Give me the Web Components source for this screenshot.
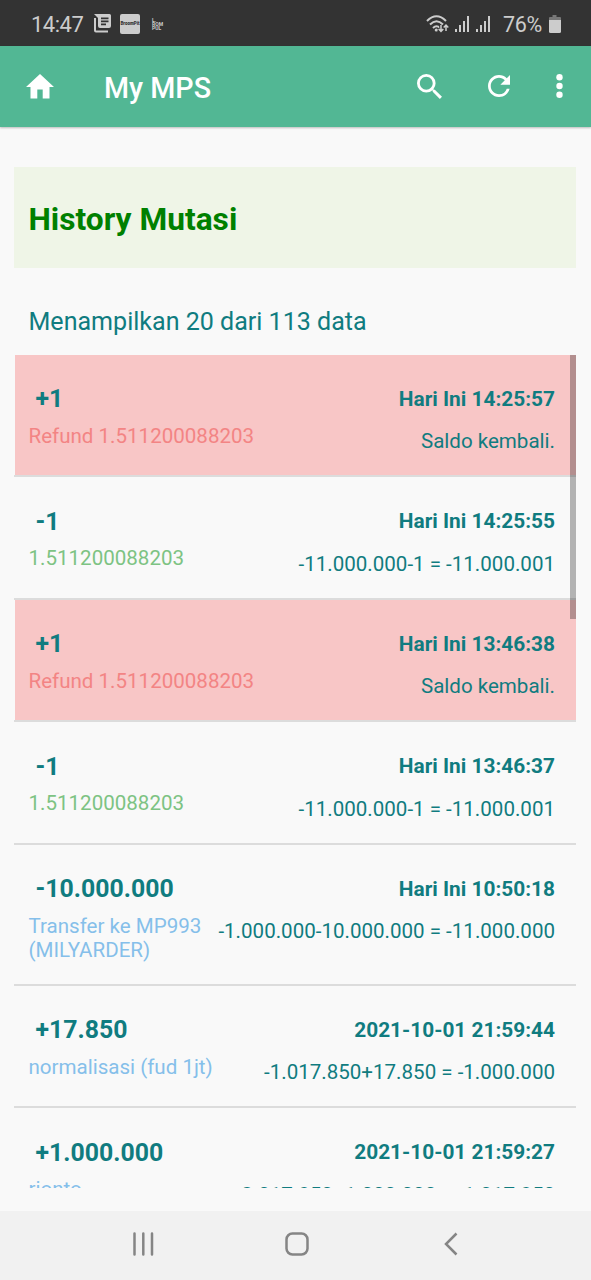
<!DOCTYPE html>
<html lang="id">
<head>
<meta charset="utf-8">
<title>My MPS</title>
<style>
html,body{margin:0;padding:0;height:100%}
body{background:#f9f9f9;font-family:Roboto,"Liberation Sans",sans-serif;overflow:hidden}
</style>
</head>
<body>
<mps-app></mps-app>
<script>
const define = (name, html, init) => {
  const t = document.createElement('template');
  t.innerHTML = html;
  customElements.define(name, class extends HTMLElement {
    constructor() {
      super();
      this.attachShadow({mode: 'open'}).appendChild(t.content.cloneNode(true));
    }
    connectedCallback() { if (init) init(this, this.shadowRoot); }
  });
};

define('status-bar', `
<style>
:host{display:flex;align-items:center;height:46px;background:#333;color:#ccc;padding:1px 29px 0 31px;box-sizing:border-box;font-size:22px;line-height:26px}
.time{width:62px;white-space:nowrap;padding-top:2px;letter-spacing:-.5px}
svg{display:block;flex:none}
.app{width:20px;height:20px;margin-left:8px;border-radius:2px;background:#ccc;color:#333;display:flex;align-items:center;justify-content:center;font-size:4.500px;line-height:20px;font-weight:900;white-space:nowrap}
.mini{margin-left:12px;font-size:5px;line-height:4px;font-weight:700;width:14px;white-space:pre}
.space{flex:1}
.pct{margin:0 6px 0 7px;padding-top:2px;font-size:21.5px;letter-spacing:-.3px;white-space:nowrap}
</style>
<span class="time">14:47</span>
<svg width="19" height="19" viewBox="0 0 19 19"><path fill="#ccc" d="M1 4h2v12.500h12v2H3q-2 0-2-2z"/><path fill="#ccc" fill-rule="evenodd" d="M1 0h15.500q1.500 0 1.500 1.500v10.500q0 2-2 2H7q-2 0-2-2V4zM8 3.500v1.700h7.500V3.500zM8 6.500v1.700h7.500V6.500zM8 9.500v1.700h5V9.500z"/></svg>
<span class="app">BroomPit</span>
<span class="mini">L.
ROM
PUL</span>
<span class="space"></span>
<svg width="24" height="20" viewBox="0 0 24 20"><g fill="none" stroke="#ccc" stroke-width="2"><path d="M1 7Q10.500-2.500 20 7M4 10.500Q10.500 4 17 10.500M7 14Q10.500 10.500 14 14"/></g><circle cx="10.300" cy="16" r="1.600" fill="#ccc"/><path d="M15 11v6M12.700 15l2.300 2.500 2.300-2.500M20 17v-6M17.700 13.500l2.300-2.500 2.300 2.500" fill="none" stroke="#333" stroke-width="3.500"/><path d="M15 11v6M12.700 15l2.300 2.500 2.300-2.500M20 17v-6M17.700 13.500l2.300-2.500 2.300 2.500" fill="none" stroke="#ccc" stroke-width="1.500"/></svg>
<svg width="42" height="18" viewBox="0 0 42 18" style="margin-left:4px"><path fill="#ccc" d="M1 14h2v3H1zM5 10h2v7H5zM9 6h2v11H9zM13 1h2v16h-2zM22 14h2v3h-2zM26 10h2v7h-2zM30 6h2v11h-2zM34 1h2v16h-2z"/></svg>
<span class="pct">76%</span>
<svg width="14" height="18" viewBox="0 0 14 18"><path fill="#777" d="M4.500 0h4v2H12q1 0 1 1v3H1V3q0-1 1-1h2.500z"/><path fill="#ccc" d="M1 5h12v11.500q0 1.500-1.500 1.500h-9Q1 18 1 16.500z"/></svg>
`);

define('app-bar', `
<style>
:host{display:flex;align-items:center;height:81px;background:#52b794;color:#fff;padding:0 28px 1px 26px;box-sizing:border-box;box-shadow:0 1px 2px rgba(0,0,0,.25)}
h1{margin:3px 0 0 49px;font-size:28.7px;font-weight:500;line-height:36px;flex:1;white-space:nowrap}
svg{display:block;fill:currentColor;flex:none}
</style>
<svg width="29" height="25" viewBox="0 0 29 25"><path d="M14 0 28 13h-4.500v11.500h-6.800V15.500h-5.400v9H4.500V13H0z"/></svg>
<h1><slot></slot></h1>
<svg width="25" height="25" viewBox="3 3 17.500 17.500" style="margin-right:46px"><path d="M15.500 14h-.79l-.28-.27A6.471 6.471 0 0 0 16 9.500 6.500 6.500 0 1 0 9.500 16c1.610 0 3.090-.59 4.230-1.570l.27.28v.79l5 4.990L20.490 19l-4.990-5zm-6 0C7.010 14 5 11.990 5 9.500S7.010 5 9.500 5 14 7.010 14 9.500 11.990 14 9.500 14z"/></svg>
<svg width="22" height="22" viewBox="4 4 16 16" style="margin-right:46px"><path d="M17.650 6.350A7.958 7.958 0 0 0 12 4c-4.420 0-7.990 3.580-7.990 8s3.570 8 7.990 8c3.730 0 6.840-2.550 7.730-6h-2.080A5.990 5.990 0 0 1 12 18c-3.310 0-6-2.690-6-6s2.690-6 6-6c1.660 0 3.140.69 4.220 1.780L13 11h7V4l-2.350 2.350z"/></svg>
<svg width="7" height="24" viewBox="0 0 7 24"><circle cx="3.500" cy="3.300" r="3.200"/><circle cx="3.500" cy="12" r="3.200"/><circle cx="3.500" cy="20.700" r="3.200"/></svg>
`);

define('section-title', `
<style>
:host{display:flex;align-items:center;height:101px;padding:5px 15px 0 14.5px;box-sizing:border-box;background:#eff5e7;color:#008000}
h2{margin:0;font-size:31.7px;font-weight:700;line-height:40px;white-space:nowrap}
</style><h2><slot></slot></h2>`);

define('mutation-row', `
<style>
:host{display:grid;grid-template-columns:auto auto;justify-content:space-between;align-content:start;height:122.5px;padding:27px 21px 0 14.500px;box-sizing:border-box;border-bottom:2px solid #dcdcdc;color:#107c80;white-space:nowrap}
:host([refund]){background:linear-gradient(90deg,transparent 1px,#f8c6c6 1px)}
:host([tall]){height:141px}
.left,.right{display:flex;flex-direction:column}
.right{align-items:flex-end}
.amount{font-size:24.850px;font-weight:700;line-height:34px;padding:.4px 0 0 7px}
.note{font-size:20.550px;line-height:24px;margin-top:7.500px;white-space:pre;color:var(--note)}
.date{font-size:20.850px;font-weight:700;line-height:34px;margin-top:-.200px}
.sum{font-size:20.550px;line-height:24px;margin-top:13.500px}
</style>
<div class="left"><span class="amount"><slot name="amount"></slot></span><span class="note"><slot name="note"></slot></span></div>
<div class="right"><span class="date"><slot name="date"></slot></span><span class="sum"><slot name="sum"></slot></span></div>
`);

const rows = [
  ['+1', 'Refund 1.511200088203', 'Hari Ini 14:25:57', 'Saldo kembali.', '#f38484', 'refund'],
  ['-1', '1.511200088203', 'Hari Ini 14:25:55', '-11.000.000-1 = -11.000.001', '#7dc383', ''],
  ['+1', 'Refund 1.511200088203', 'Hari Ini 13:46:38', 'Saldo kembali.', '#f38484', 'refund'],
  ['-1', '1.511200088203', 'Hari Ini 13:46:37', '-11.000.000-1 = -11.000.001', '#7dc383', ''],
  ['-10.000.000', 'Transfer ke MP993\n(MILYARDER)', 'Hari Ini 10:50:18', '-1.000.000-10.000.000 = -11.000.000', '#85bfea', 'tall'],
  ['+17.850', 'normalisasi (fud 1jt)', '2021-10-01 21:59:44', '-1.017.850+17.850 = -1.000.000', '#85bfea', ''],
  ['+1.000.000', 'rionto', '2021-10-01 21:59:27', '-2.017.850+1.000.000 = -1.017.850', '#85bfea', '']
];

define('mutation-list', `
<style>
:host{display:block;position:relative;height:833px;overflow:hidden}
.thumb{position:absolute;right:0;top:0;width:6px;height:264px;background:rgba(0,0,0,.28)}
</style><div class="rows"></div><div class="thumb"></div>`, (host, root) => {
  root.querySelector('.rows').innerHTML = rows.map(([a, n, d, s, c, k]) =>
    `<mutation-row ${k} style="--note:${c}"><span slot="amount">${a}</span><span slot="note">${n}</span><span slot="date">${d}</span><span slot="sum">${s}</span></mutation-row>`).join('');
});

define('nav-bar', `
<style>
:host{display:grid;grid-template-columns:22px 24px 14px;column-gap:131px;align-items:center;height:69px;background:#f1f1f1;padding:0 0 3px 132px;box-sizing:border-box}
svg{display:block;fill:none;stroke:#858585;stroke-width:2.500}
</style>
<svg width="22" height="24" viewBox="0 0 22 24"><path d="M2.500 1.500v21M11.300 1.500v21M20 1.500v21" stroke-linecap="round"/></svg>
<svg width="24" height="24" viewBox="0 0 24 24"><rect x="1.500" y="1.500" width="21" height="21" rx="6"/></svg>
<svg width="14" height="24" viewBox="0 0 14 24" style="margin-left:4px"><path d="M12.500 1.500 2 12l10.500 10.500"/></svg>
`);

define('mps-app', `
<style>
:host{display:flex;flex-direction:column;height:1280px;background:#f9f9f9}
main{flex:1;padding:40px 15px 0 14px;display:flex;flex-direction:column}
p{margin:0;padding:34px 14.500px 0;font-size:25.05px;line-height:40px;height:86.900px;box-sizing:border-box;color:#107c80;white-space:nowrap}
</style>
<status-bar></status-bar>
<app-bar>My MPS</app-bar>
<main>
<section-title>History Mutasi</section-title>
<p>Menampilkan 20 dari 113 data</p>
<mutation-list></mutation-list>
</main>
<nav-bar></nav-bar>
`);
</script>
</body>
</html>
